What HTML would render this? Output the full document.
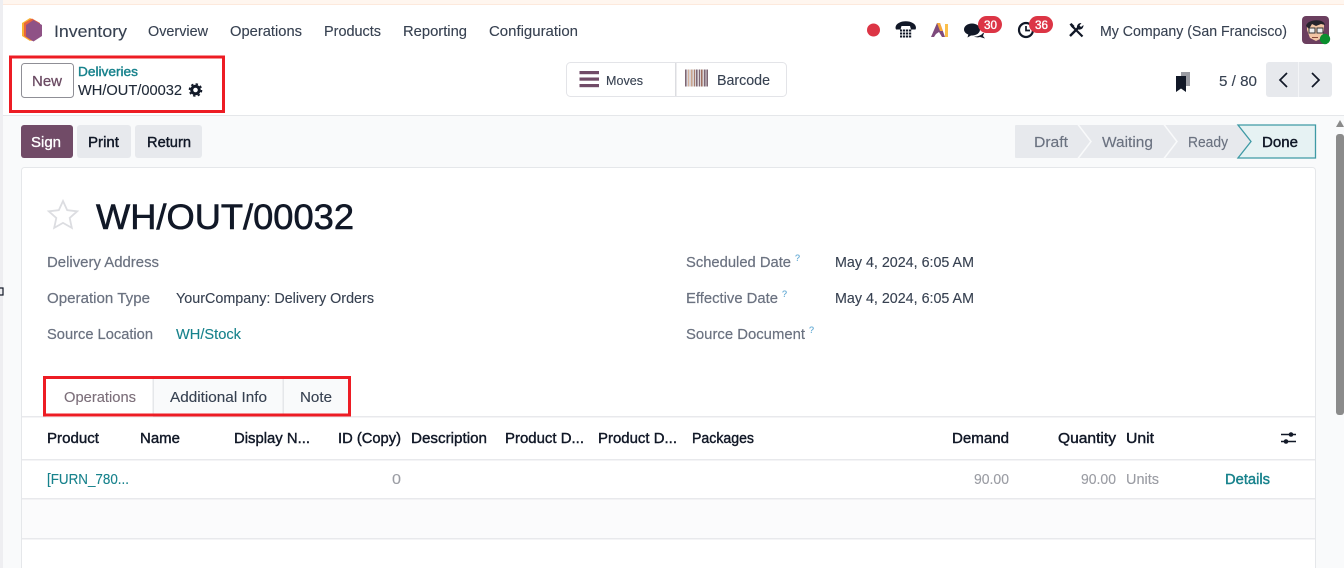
<!DOCTYPE html>
<html>
<head>
<meta charset="utf-8">
<style>
html,body{margin:0;padding:0;background:#fff;width:1344px;height:568px;overflow:hidden}
svg{display:block}
text{font-family:"Liberation Sans",sans-serif;font-size:14.5px;fill:#374151;stroke:#374151;stroke-width:.12}
.b{fill:#111827;stroke:#111827;stroke-width:.4}
.l{fill:#6b7280;stroke:#6b7280;stroke-width:.2}
.h{fill:#111827;stroke:#111827;stroke-width:.4}
.m{fill:#9a9ca3;stroke:#9a9ca3}
.t{fill:#17828c;stroke:#17828c}
.tb{fill:#17828c;stroke:#17828c;stroke-width:.4}
.q{fill:#5fa8d3;stroke:#5fa8d3;font-size:9px}
.w{fill:#fff;stroke:#fff;stroke-width:.35}
.s{fill:#6b7280;stroke:#6b7280;stroke-width:.15}
</style>
</head>
<body>
<svg width="1344" height="568" viewBox="0 0 1344 568" xmlns="http://www.w3.org/2000/svg">
<rect width="1344" height="568" fill="#fff"/>
<!-- top strip -->
<rect x="0" y="0" width="1344" height="4" fill="#fff6ef"/>
<rect x="0" y="4" width="1344" height="1" fill="#fde9dc"/>
<rect x="0" y="0" width="3" height="568" fill="#eeeef1"/>
<!-- body background -->
<rect x="3" y="116" width="1341" height="452" fill="#f9fafb"/>
<rect x="3" y="115" width="1341" height="1" fill="#e5e7ea"/>
<!-- logo -->
<polygon points="30,18 38,23 38,36 30,41 22,36 22,23" fill="#f9b233"/>
<polygon points="32,18.500 40,23 40,36 32,41 24,36 24,23" fill="#e8643c"/>
<polygon points="33.500,20 42,25 42,36 33.500,41.500 26,36.500 26,25" fill="#8f5286"/>
<!-- nav -->
<text x="54" y="37" style="font-size:17px" textLength="73" lengthAdjust="spacingAndGlyphs">Inventory</text>
<text x="148" y="36" textLength="60" lengthAdjust="spacingAndGlyphs">Overview</text>
<text x="230" y="36" textLength="72" lengthAdjust="spacingAndGlyphs">Operations</text>
<text x="324" y="36" textLength="57" lengthAdjust="spacingAndGlyphs">Products</text>
<text x="403" y="36" textLength="64" lengthAdjust="spacingAndGlyphs">Reporting</text>
<text x="489" y="36" textLength="89" lengthAdjust="spacingAndGlyphs">Configuration</text>
<!-- right icons -->
<circle cx="873.500" cy="30" r="6.500" fill="#dc3545"/>
<path d="M895.500 28c0-9 20.500-9 20.500 0l-.5 1.500h-4.500l-1-3.500h-8.500l-1 3.500h-4.500z" fill="#111827"/>
<g fill="#111827"><rect x="900" y="29.500" width="2.200" height="2"/><rect x="903" y="29.500" width="2.200" height="2"/><rect x="906" y="29.500" width="2.200" height="2"/><rect x="909" y="29.500" width="2.200" height="2"/><rect x="900" y="32.500" width="2.200" height="2"/><rect x="903" y="32.500" width="2.200" height="2"/><rect x="906" y="32.500" width="2.200" height="2"/><rect x="909" y="32.500" width="2.200" height="2"/><rect x="900" y="35.500" width="2.200" height="2"/><rect x="903" y="35.500" width="2.200" height="2"/><rect x="906" y="35.500" width="2.200" height="2"/><rect x="909" y="35.500" width="2.200" height="2"/></g>
<path d="M931 37l6-14h3l5 14h-3l-3-5-3 2-2 3z" fill="#7d4a7c"/>
<path d="M937 23h3l3 8h-3z" fill="#f6a83b"/>
<rect x="945" y="24" width="3" height="13" fill="#fbbf4a"/>
<path d="M964 29.500c0-3.500 3.500-6 8-6s8 2.500 8 6-3.500 6-8 6h-1l-3.500 2 .8-3c-2.600-.9-4.300-2.800-4.300-5z" fill="#111827"/>
<path d="M974 36.500c3 .3 7-.8 9-3.500l1 0-1 3 2 2.500-5-1.500c-2 .5-4 .5-6-.5z" fill="#111827"/>
<rect x="978" y="16" width="24" height="17" rx="8.500" fill="#dc3545"/>
<text x="984" y="29" class="w" style="font-size:11.500px" textLength="13" lengthAdjust="spacingAndGlyphs">30</text>
<circle cx="1026" cy="30" r="7" fill="#fff" stroke="#111827" stroke-width="2.200"/>
<path d="M1026 26v4.500h4" fill="none" stroke="#111827" stroke-width="1.700"/>
<rect x="1029" y="16" width="24" height="17" rx="8.500" fill="#dc3545"/>
<text x="1035" y="29" class="w" style="font-size:11.500px" textLength="13" lengthAdjust="spacingAndGlyphs">36</text>
<path d="M1071.500 25.500l11 11" fill="none" stroke="#111827" stroke-width="2.200"/>
<path d="M1069.500 24.500l2-1.500 3 3-2 2z" fill="#111827"/>
<path d="M1070 36l8-8" fill="none" stroke="#111827" stroke-width="2.400"/>
<path d="M1077 28c-.5-2.500 1-5 4.500-5l-2 2.500 1.500 1.500 2.500-2c0 3.500-2.500 5-5 4.500z" fill="#111827"/>
<text x="1100" y="36" textLength="187" lengthAdjust="spacingAndGlyphs">My Company (San Francisco)</text>
<!-- avatar -->
<rect x="1302" y="16" width="27" height="28" rx="4" fill="#6b3f5f"/>
<path d="M1307 24c3-4 14-4 17 0v6l-2 8-6 3-6-3-3-8z" fill="#f2c6a5"/>
<path d="M1306 26c1-7 18-8 19-1l-4-1-5 2-4-2-3 5z" fill="#26242c"/>
<rect x="1309" y="28" width="6" height="5" fill="#eee" stroke="#333" stroke-width="1"/>
<rect x="1317" y="28" width="6" height="5" fill="#eee" stroke="#333" stroke-width="1"/>
<path d="M1312 37.500h6" stroke="#8a4b3a" stroke-width="1"/>
<circle cx="1325" cy="39" r="5.200" fill="#0a8f2e"/>
<!-- control panel -->
<rect x="21.500" y="63.500" width="52" height="34" rx="3" fill="#fff" stroke="#8f8f96" stroke-width="1"/>
<text x="32" y="86" style="fill:#6a4a62;stroke:#6a4a62;stroke-width:.25" textLength="30" lengthAdjust="spacingAndGlyphs">New</text>
<text x="78" y="76" class="tb" style="font-size:13px" textLength="60" lengthAdjust="spacingAndGlyphs">Deliveries</text>
<text x="78" y="95" style="fill:#1f2937;stroke:#1f2937" textLength="104" lengthAdjust="spacingAndGlyphs">WH/OUT/00032</text>
<circle cx="195.500" cy="90" r="3.800" fill="none" stroke="#111827" stroke-width="3"/>
<circle cx="195.500" cy="90" r="6" fill="none" stroke="#111827" stroke-width="1.600" stroke-dasharray="2.400 2.300"/>
<rect x="10.500" y="57" width="213" height="54.500" fill="none" stroke="#ed1c24" stroke-width="3"/>
<!-- Moves / Barcode -->
<rect x="566.500" y="62.500" width="220" height="34" rx="4" fill="#fff" stroke="#e3e4e8"/>
<rect x="675" y="63" width="1.500" height="33" fill="#dcdde1"/>
<g fill="#714b67"><rect x="579.500" y="71" width="19.500" height="3.200"/><rect x="579.500" y="77.500" width="19.500" height="3.200"/><rect x="579.500" y="84" width="19.500" height="3.200"/></g>
<text x="606" y="85" style="font-size:12.500px" textLength="37" lengthAdjust="spacingAndGlyphs">Moves</text>
<rect x="685" y="69.500" width="23" height="17" fill="#d9d3d6"/>
<g fill="#7d6674"><rect x="685" y="69.500" width="1.500" height="17"/><rect x="688" y="69.500" width="1" height="17" fill="#d6b29b"/><rect x="691" y="69.500" width="1.500" height="17" fill="#c9a58f"/><rect x="694" y="69.500" width="1" height="17" fill="#a97f6d"/><rect x="696" y="69.500" width="1.500" height="17"/><rect x="699" y="69.500" width="1" height="17"/><rect x="701" y="69.500" width="1.500" height="17" fill="#a06f60"/><rect x="704" y="69.500" width="1.500" height="17"/><rect x="706.500" y="69.500" width="1.500" height="17"/></g>
<text x="717" y="85" textLength="53" lengthAdjust="spacingAndGlyphs">Barcode</text>
<!-- pager -->
<rect x="1181" y="72" width="9" height="14" fill="#9a9ca3"/>
<path d="M1176 76h10v16l-5-3.500-5 3.500z" fill="#111827"/>
<text x="1219" y="86" textLength="38" lengthAdjust="spacingAndGlyphs">5 / 80</text>
<rect x="1266" y="62" width="66" height="35" rx="3" fill="#e7e9ed"/>
<rect x="1298" y="62" width="1" height="35" fill="#f4f5f7"/>
<path d="M1287 73l-7 7 7 7" fill="none" stroke="#111827" stroke-width="1.700"/>
<path d="M1312 73l7 7-7 7" fill="none" stroke="#111827" stroke-width="1.700"/>
<!-- action buttons -->
<rect x="21" y="125" width="52" height="33" rx="3" fill="#714b67"/>
<text x="31" y="147" class="w" textLength="30" lengthAdjust="spacingAndGlyphs">Sign</text>
<rect x="77" y="125" width="54" height="33" rx="3" fill="#e7e9ed"/>
<text x="88" y="147" class="b" textLength="31" lengthAdjust="spacingAndGlyphs">Print</text>
<rect x="135" y="125" width="67" height="33" rx="3" fill="#e7e9ed"/>
<text x="147" y="147" class="b" textLength="44" lengthAdjust="spacingAndGlyphs">Return</text>
<!-- statusbar -->
<rect x="1015" y="125" width="240" height="33" rx="1" fill="#e7e9ed"/>
<path d="M1078 124.500l13 17-13 17M1164 124.500l13 17-13 17" fill="none" stroke="#f9fafb" stroke-width="1.500"/>
<text x="1034" y="147" class="s" textLength="34" lengthAdjust="spacingAndGlyphs">Draft</text>
<text x="1102" y="147" class="s" textLength="51" lengthAdjust="spacingAndGlyphs">Waiting</text>
<text x="1188" y="147" class="s" textLength="40" lengthAdjust="spacingAndGlyphs">Ready</text>
<path d="M1238 125h77.500v33h-77.500l13-16.500z" fill="#e6f2f3" stroke="#3f9aa5" stroke-width="1.300"/>
<text x="1262" y="147" class="b" textLength="36" lengthAdjust="spacingAndGlyphs">Done</text>
<!-- card -->
<rect x="21.500" y="167.500" width="1294" height="420" rx="3" fill="#fff" stroke="#e5e7ea"/>
<path d="M63 201l4.200 9.200 10 1.100-7.500 6.700 2.100 9.900-8.800-5-8.800 5 2.100-9.900-7.500-6.700 10-1.100z" fill="none" stroke="#dcdde1" stroke-width="1.800"/>
<text x="96" y="229" style="font-size:35px;fill:#111827;stroke:#111827;stroke-width:.6" textLength="258" lengthAdjust="spacingAndGlyphs">WH/OUT/00032</text>
<!-- fields -->
<text x="47" y="267" class="l" textLength="112" lengthAdjust="spacingAndGlyphs">Delivery Address</text>
<text x="47" y="303" class="l" textLength="103" lengthAdjust="spacingAndGlyphs">Operation Type</text>
<text x="176" y="303" textLength="198" lengthAdjust="spacingAndGlyphs">YourCompany: Delivery Orders</text>
<text x="47" y="339" class="l" textLength="106" lengthAdjust="spacingAndGlyphs">Source Location</text>
<text x="176" y="339" class="t" textLength="65" lengthAdjust="spacingAndGlyphs">WH/Stock</text>
<text x="686" y="267" class="l" textLength="105" lengthAdjust="spacingAndGlyphs">Scheduled Date</text>
<text x="795" y="261" class="q">?</text>
<text x="835" y="267" textLength="139" lengthAdjust="spacingAndGlyphs">May 4, 2024, 6:05 AM</text>
<text x="686" y="303" class="l" textLength="92" lengthAdjust="spacingAndGlyphs">Effective Date</text>
<text x="782" y="297" class="q">?</text>
<text x="835" y="303" textLength="139" lengthAdjust="spacingAndGlyphs">May 4, 2024, 6:05 AM</text>
<text x="686" y="339" class="l" textLength="119" lengthAdjust="spacingAndGlyphs">Source Document</text>
<text x="809" y="333" class="q">?</text>
<!-- tabs -->
<rect x="153" y="379" width="196" height="37" fill="#f9fafb"/>
<rect x="22" y="416" width="1293" height="1.500" fill="#e8e9ec"/>
<rect x="46" y="379" width="107" height="38" fill="#fff"/>
<rect x="152.500" y="379" width="1.500" height="37" fill="#e5e7ea"/>
<rect x="282.500" y="379" width="1.500" height="37" fill="#e5e7ea"/>
<text x="64" y="402" style="fill:#7c6f7a;stroke:#7c6f7a" textLength="72" lengthAdjust="spacingAndGlyphs">Operations</text>
<text x="170" y="402" textLength="97" lengthAdjust="spacingAndGlyphs">Additional Info</text>
<text x="300" y="402" textLength="32" lengthAdjust="spacingAndGlyphs">Note</text>
<rect x="44.500" y="377.500" width="305" height="37.500" fill="none" stroke="#ed1c24" stroke-width="3"/>
<!-- table header -->
<text x="47" y="443" class="h" textLength="52" lengthAdjust="spacingAndGlyphs">Product</text>
<text x="140" y="443" class="h" textLength="40" lengthAdjust="spacingAndGlyphs">Name</text>
<text x="234" y="443" class="h" textLength="76" lengthAdjust="spacingAndGlyphs">Display N...</text>
<text x="338" y="443" class="h" textLength="63" lengthAdjust="spacingAndGlyphs">ID (Copy)</text>
<text x="411" y="443" class="h" textLength="76" lengthAdjust="spacingAndGlyphs">Description</text>
<text x="505" y="443" class="h" textLength="79" lengthAdjust="spacingAndGlyphs">Product D...</text>
<text x="598" y="443" class="h" textLength="79" lengthAdjust="spacingAndGlyphs">Product D...</text>
<text x="692" y="443" class="h" textLength="62" lengthAdjust="spacingAndGlyphs">Packages</text>
<text x="952" y="443" class="h" textLength="57" lengthAdjust="spacingAndGlyphs">Demand</text>
<text x="1058" y="443" class="h" textLength="58" lengthAdjust="spacingAndGlyphs">Quantity</text>
<text x="1126" y="443" class="h" textLength="28" lengthAdjust="spacingAndGlyphs">Unit</text>
<path d="M1281 434.500h15M1281 441.500h15" stroke="#111827" stroke-width="1.500"/>
<circle cx="1291" cy="434.500" r="2.300" fill="#111827"/>
<circle cx="1286" cy="441.500" r="2.300" fill="#111827"/>
<rect x="22" y="459" width="1293" height="1.500" fill="#e8e9ec"/>
<!-- row -->
<text x="47" y="484" class="t" textLength="82" lengthAdjust="spacingAndGlyphs">[FURN_780...</text>
<text x="392" y="484" class="m" textLength="9" lengthAdjust="spacingAndGlyphs">0</text>
<text x="974" y="484" class="m" textLength="35" lengthAdjust="spacingAndGlyphs">90.00</text>
<text x="1081" y="484" class="m" textLength="35" lengthAdjust="spacingAndGlyphs">90.00</text>
<text x="1126" y="484" class="m" textLength="33" lengthAdjust="spacingAndGlyphs">Units</text>
<text x="1225" y="484" class="tb" textLength="45" lengthAdjust="spacingAndGlyphs">Details</text>
<rect x="22" y="498" width="1293" height="1.500" fill="#e8e9ec"/>
<rect x="22" y="499.500" width="1293" height="38.500" fill="#fbfbfc"/>
<rect x="22" y="538" width="1293" height="1.500" fill="#e8e9ec"/>
<!-- scrollbar -->
<polygon points="1340,120 1336,127 1344,127" fill="#8a8a8a"/>
<rect x="1336" y="134" width="8" height="281" rx="3" fill="#8b8b8b"/>
<!-- left edge glyph -->
<rect x="-2" y="288" width="5" height="7" fill="none" stroke="#111827" stroke-width="1.200"/>
</svg>
</body>
</html>
